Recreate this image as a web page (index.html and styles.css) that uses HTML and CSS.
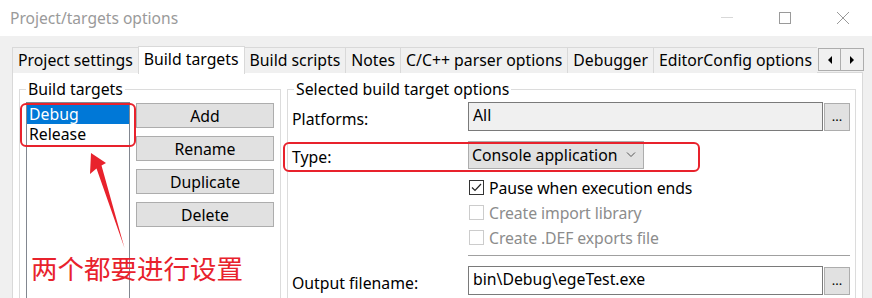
FILE: index.html
```html
<!DOCTYPE html>
<html lang="en">

<head>
    <meta charset="UTF-8">
    <title>Project/targets options</title>
    <link rel="stylesheet" href="styles.css">
</head>

<body>
    <div class="window">
        <div class="titlebar">
            <span class="title">Project/targets options</span>
            <div class="controls">
                <span class="ctl"><svg width="14" height="14" viewBox="0 0 14 14"><path d="M1 6.5h12" stroke="#d8d8d8" stroke-width="1"/></svg></span>
                <span class="ctl"><svg width="14" height="14" viewBox="0 0 14 14"><rect x="1.5" y="1.5" width="11" height="11" fill="none" stroke="#9a9a9a" stroke-width="1"/></svg></span>
                <span class="ctl"><svg width="14" height="14" viewBox="0 0 14 14"><path d="M1 1l12 12M13 1L1 13" stroke="#9a9a9a" stroke-width="1"/></svg></span>
            </div>
        </div>

        <div class="dialog">
            <div class="tabstrip">
                <div class="tabs">
                    <div class="tab">Project settings</div>
                    <div class="tab active">Build targets</div>
                    <div class="tab">Build scripts</div>
                    <div class="tab">Notes</div>
                    <div class="tab">C/C++ parser options</div>
                    <div class="tab">Debugger</div>
                    <div class="tab">EditorConfig options</div>
                </div>
                <div class="scroller">
                    <span class="arrow"><svg width="6" height="8" viewBox="0 0 6 8"><path d="M5 0v8L1 4z" fill="#000"/></svg></span>
                    <span class="arrow"><svg width="6" height="8" viewBox="0 0 6 8"><path d="M1 0v8l4-4z" fill="#000"/></svg></span>
                </div>
            </div>

            <div class="panel">
                <fieldset class="group">
                    <legend>Build targets</legend>
                    <div class="targets">
                        <ul class="listbox">
                            <li class="selected">Debug</li>
                            <li>Release</li>
                        </ul>
                        <div class="buttons">
                            <button class="btn">Add</button>
                            <button class="btn">Rename</button>
                            <button class="btn">Duplicate</button>
                            <button class="btn">Delete</button>
                        </div>
                    </div>
                </fieldset>

                <fieldset class="group">
                    <legend>Selected build target options</legend>
                    <div class="form">
                        <label class="row-label">Platforms:</label>
                        <div class="field readonly">All</div>
                        <button class="dots">...</button>

                        <label class="row-label type-label">Type:</label>
                        <div class="combo-cell">
                            <div class="combo">
                                <span>Console application</span>
                                <svg width="10" height="6" viewBox="0 0 10 6"><path d="M1 0.5l4 4 4-4" fill="none" stroke="#555" stroke-width="1"/></svg>
                            </div>
                        </div>

                        <div class="checks">
                            <div class="check"><span class="box checked"><svg width="11" height="9" viewBox="0 0 11 9"><path d="M1 4.5l3 3 6-6.5" fill="none" stroke="#222" stroke-width="1.2"/></svg></span>Pause when execution ends</div>
                            <div class="check disabled"><span class="box"></span>Create import library</div>
                            <div class="check disabled"><span class="box"></span>Create .DEF exports file</div>
                            <div class="separator"></div>
                        </div>

                        <label class="row-label out-label">Output filename:</label>
                        <div class="field out-field">bin\Debug\egeTest.exe</div>
                        <button class="dots out-dots">...</button>
                    </div>
                </fieldset>
            </div>
        </div>

        <!-- annotations drawn over the screenshot -->
        <div class="mark mark-list"></div>
        <div class="mark mark-type"></div>
        <svg class="note-arrow" width="60" height="110" viewBox="80 150 60 110">
            <path d="M91 153L106 163L101.5 165.5L124.5 248L96.5 168.5L90 174Z" fill="#e8222c"/>
        </svg>
        <div class="note">两个都要进行设置</div>
    </div>
</body>

</html>
```

FILE: styles.css
```css
* {
    margin: 0;
    padding: 0;
    box-sizing: border-box;
}

body {
    font-family: 'Noto Sans', 'Open Sans', sans-serif;
    font-size: 15.8px;
    color: #000;
    background: #f0f0f0;
    width: 872px;
    height: 298px;
    overflow: hidden;
}

.window {
    position: relative;
    height: 298px;
    overflow: hidden;
}

.titlebar {
    height: 36px;
    background: #fff;
    display: flex;
    align-items: center;
    justify-content: space-between;
    padding-left: 10px;
}

.title {
    color: #9a9a9a;
    font-size: 15.6px;
    margin-top: -1px;
}

.controls {
    display: flex;
    height: 100%;
}

.ctl {
    width: 58px;
    display: flex;
    align-items: center;
    justify-content: center;
}

.ctl svg {
    display: block;
}

.dialog {
    padding: 10px 9px 0 12px;
}

/* tabs */
.tabstrip {
    display: flex;
    align-items: flex-end;
    height: 27px;
    position: relative;
    z-index: 1;
}

.tabs {
    display: flex;
    align-items: flex-end;
    flex: 1;
    height: 100%;
}

.tab {
    height: 26px;
    line-height: 25px;
    padding: 0 5px;
    border: 1px solid #d9d9d9;
    border-right: none;
    border-bottom: none;
    background: #f0f0f0;
    white-space: nowrap;
}

.tab.active {
    height: 28px;
    background: #fff;
    line-height: 25px;
    border-right: 1px solid #d9d9d9;
    margin-bottom: -1px;
}

.tab.active + .tab {
    border-left: none;
}

.scroller {
    display: flex;
    align-self: flex-start;
    margin-top: 2px;
    margin-right: -1px;
}

.arrow {
    width: 23px;
    height: 23px;
    border: 1px solid #adadad;
    background: #f0f0f0;
    display: flex;
    align-items: center;
    justify-content: center;
}

.arrow + .arrow {
    border-left: none;
}

/* tab page */
.panel {
    background: #fff;
    border: 1px solid #d9d9d9;
    height: 240px;
    display: grid;
    grid-template-columns: 262px 1fr;
    gap: 6px;
    padding: 6px 6px 0 6px;
    margin-top: -1px;
}

.group {
    border: 1px solid #dcdcdc;
    padding: 0 6px;
    min-width: 0;
    height: 260px;
}

.group legend {
    padding: 0 2px;
    line-height: 20px;
}

.targets {
    display: flex;
    gap: 6px;
    margin-top: 3px;
}

.listbox {
    list-style: none;
    width: 104px;
    height: 220px;
    border: 1px solid #828790;
    padding: 1px 0;
}

.listbox li {
    height: 20px;
    line-height: 20px;
    padding-left: 2px;
}

.listbox li.selected {
    background: #0078d7;
    color: #fff;
}

.buttons {
    display: flex;
    flex-direction: column;
    gap: 8px;
    margin-top: 1px;
}

.btn {
    width: 138px;
    height: 25px;
    font: inherit;
    background: #e1e1e1;
    border: 1px solid #adadad;
    color: #000;
}

.form {
    display: grid;
    grid-template-columns: 175px 355px 26px;
    column-gap: 1px;
    align-items: center;
    margin-left: -2px;
    margin-top: 3px;
}

.row-label {
    line-height: 20px;
    padding-top: 4px;
}

.field {
    height: 29px;
    border: 1px solid #7a7a7a;
    padding-left: 4px;
    line-height: 25px;
    white-space: nowrap;
}

.field.readonly {
    background: #f0f0f0;
}

.dots {
    height: 28px;
    font: inherit;
    font-size: 13px;
    background: #e1e1e1;
    border: 1px solid #adadad;
    color: #000;
    padding-bottom: 2px;
    align-self: end;
}

.type-label {
    margin-top: 10px;
}

.combo-cell {
    grid-column: 2 / 4;
    margin-top: 10px;
}

.combo {
    width: 176px;
    height: 28px;
    background: #e1e1e1;
    border: 1px solid #adadad;
    display: flex;
    align-items: center;
    justify-content: space-between;
    padding: 0 7px 0 3px;
}

.checks {
    grid-column: 2 / 4;
    padding-top: 6px;
}

.check {
    display: flex;
    align-items: center;
    height: 25px;
    gap: 5px;
    padding-left: 1px;
    letter-spacing: -0.1px;
}

.check.disabled {
    color: #8c8c8c;
}

.box {
    width: 15px;
    height: 15px;
    border: 1px solid #cccccc;
    background: #fff;
    display: flex;
    align-items: center;
    justify-content: center;
}

.box.checked {
    border-color: #333;
}

.separator {
    border-top: 1px solid #a0a0a0;
    margin-top: 5px;
    width: 382px;
}

.out-label {
    margin-top: 10px;
}

.out-field {
    margin-top: 10px;
    background: #fff;
}

.out-dots {
    margin-top: 10px;
}

/* red annotations */
.mark {
    position: absolute;
    border: 2px solid #e8222c;
    border-radius: 6px;
}

.mark-list {
    left: 20px;
    top: 103px;
    width: 116px;
    height: 44px;
}

.mark-type {
    left: 283px;
    top: 142px;
    width: 417px;
    height: 30px;
}

.note-arrow {
    position: absolute;
    left: 80px;
    top: 150px;
}

.note {
    position: absolute;
    left: 31px;
    top: 253px;
    font-family: 'Noto Sans CJK SC', sans-serif;
    font-size: 26.5px;
    line-height: 30px;
    color: #e8222c;
}
```
